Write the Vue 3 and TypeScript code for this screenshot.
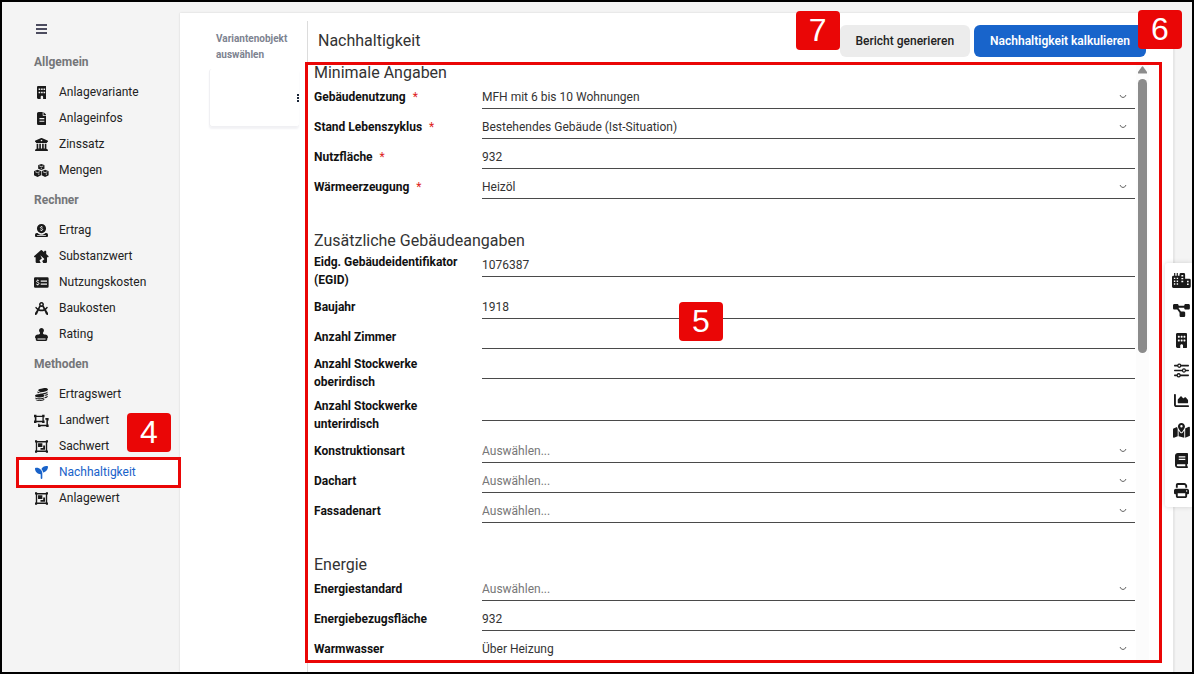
<script setup lang="ts">
import { reactive } from 'vue'

interface Icon {
  w: number
  d: string
  cut?: string
  cutWidth?: number
}

interface NavItem {
  label: string
  icon: string
  active?: boolean
}

interface Field {
  id: string
  label: string
  kind: 'select' | 'text'
  value: string
  required?: boolean
}

const icons: Record<string, Icon> = {
  building: {
    w: 384,
    d: 'M48 0C21.5 0 0 21.5 0 48V464c0 26.5 21.5 48 48 48h96V432c0-26.5 21.5-48 48-48s48 21.5 48 48v80h96c26.5 0 48-21.5 48-48V48c0-26.5-21.5-48-48-48H48zM64 240c0-8.8 7.2-16 16-16h32c8.8 0 16 7.2 16 16v32c0 8.8-7.2 16-16 16H80c-8.8 0-16-7.2-16-16V240zm112-16h32c8.8 0 16 7.2 16 16v32c0 8.8-7.2 16-16 16H176c-8.8 0-16-7.2-16-16V240c0-8.8 7.2-16 16-16zm80 16c0-8.8 7.2-16 16-16h32c8.8 0 16 7.2 16 16v32c0 8.8-7.2 16-16 16H272c-8.8 0-16-7.2-16-16V240zM80 96h32c8.8 0 16 7.2 16 16v32c0 8.8-7.2 16-16 16H80c-8.8 0-16-7.2-16-16V112c0-8.8 7.2-16 16-16zm80 16c0-8.8 7.2-16 16-16h32c8.8 0 16 7.2 16 16v32c0 8.8-7.2 16-16 16H176c-8.8 0-16-7.2-16-16V112zM272 96h32c8.8 0 16 7.2 16 16v32c0 8.8-7.2 16-16 16H272c-8.8 0-16-7.2-16-16V112c0-8.8 7.2-16 16-16z',
  },
  file: {
    w: 384,
    d: 'M64 0C28.7 0 0 28.7 0 64V448c0 35.3 28.7 64 64 64H320c35.3 0 64-28.7 64-64V160H256c-17.7 0-32-14.3-32-32V0H64zM256 0V128H384L256 0zM96 240H288V284H96zM96 344H288V388H96z',
  },
  bank: {
    w: 512,
    d: 'M243.4 2.6l-224 96c-14 6-21.8 21-18.7 35.8S16.8 160 32 160v8c0 13.3 10.7 24 24 24H456c13.3 0 24-10.7 24-24v-8c15.2 0 28.3-10.7 31.3-25.6s-4.8-29.9-18.7-35.8l-224-96c-8-3.4-17.2-3.4-25.2 0zM128 224H64V420.3c-.6 .3-1.2 .7-1.8 1.1l-48 32c-11.7 7.8-17 22.4-12.9 35.9S17.9 512 32 512H480c14.1 0 26.5-9.2 30.6-22.7s-1.1-28.1-12.9-35.9l-48-32c-.6-.4-1.2-.7-1.8-1.1V224H384V416H344V224H280V416H232V224H168V416H128V224zM256 64a32 32 0 1 1 0 64 32 32 0 1 1 0-64z',
  },
  cubes: {
    w: 576,
    d: 'M288 0L400 44Q412 50 412 64V186L288 240L164 186V64Q164 50 176 44ZM140 226L264 272Q276 278 276 292V440L140 508L12 452Q0 446 0 432V292Q0 278 12 272ZM436 226L564 272Q576 278 576 292V432Q576 446 564 452L436 508L300 440V292Q300 278 312 272Z',
    cut: 'M210 76L288 106L366 76M288 150V200M50 306L138 340L226 306M190 370V430M350 306L438 340L526 306M486 370V430',
    cutWidth: 30,
  },
  slot: {
    w: 512,
    d: 'M256 0A180 180 0 1 1 256 360A180 180 0 1 1 256 0zM64 352H100C140 398 198 424 256 424S372 398 412 352H448Q512 356 512 420V472Q512 512 470 512H42Q0 512 0 472V420Q0 356 64 352zM84 444V470H428V444z',
    cut: 'M300 126C270 102 214 106 214 142C214 182 302 170 302 216C302 256 240 258 208 232M256 84V112M256 246V278',
    cutWidth: 38,
  },
  house: {
    w: 576,
    d: 'M266 10Q288-10 310 10L400 88V54Q400 32 422 32H458Q480 32 480 54V158L566 232Q586 256 560 288H512V464Q512 512 464 512H366L322 436L404 366Q412 350 400 340L250 210L312 336L222 400Q214 410 220 420L264 512H112Q64 512 64 464V288H16Q-10 256 10 232z',
  },
  check: {
    w: 576,
    d: 'M48 48H528Q576 48 576 96V416Q576 464 528 464H48Q0 464 0 416V96Q0 48 48 48zM264 178V222H512V178zM264 300V344H512V300z',
    cut: 'M192 190C160 166 100 170 100 210C100 258 196 244 196 298C196 346 122 346 88 316M146 140V172M146 330V370',
    cutWidth: 38,
  },
  compass: {
    w: 512,
    d: 'M256 0A96 96 0 0 1 340 142L400 246Q430 226 452 196Q468 180 490 192Q512 206 500 230Q474 268 434 302L512 438V490Q506 516 480 508L432 484L372 340Q316 364 256 364T142 342L80 484L32 508Q6 516 0 490V438L84 304Q48 278 18 240Q4 216 24 196Q48 184 64 204Q84 232 116 250L172 142A96 96 0 0 1 256 0zM220 190L174 282Q256 314 338 282L292 190Q256 204 220 190zM256 60A36 36 0 1 0 256 132A36 36 0 1 0 256 60z',
  },
  stamp: {
    w: 512,
    d: 'M312 201.8c0-17.4 9.2-33.2 19.9-47C344.5 138.5 352 118.1 352 96c0-53-43-96-96-96s-96 43-96 96c0 22.1 7.5 42.5 20.1 58.8c10.7 13.8 19.9 29.6 19.9 47c0 29.9-24.3 54.2-54.2 54.2H112C50.1 256 0 306.1 0 368c0 20.9 13.4 38.7 32 45.3V464c0 26.5 21.5 48 48 48H432c26.5 0 48-21.5 48-48V413.3c18.6-6.6 32-24.4 32-45.3c0-61.9-50.1-112-112-112H366.2c-29.9 0-54.2-24.3-54.2-54.2zM416 416v32H96V416H416z',
  },
  coins: {
    w: 512,
    d: 'M320 10C430-14 512 14 512 62S436 148 320 158S128 130 128 86S210 32 320 10zM100 128C170 214 400 218 496 134V160Q496 230 370 244Q260 190 110 204Q92 180 100 128zM398 266Q470 250 512 212V250Q500 300 406 316zM398 350Q460 336 500 306V340Q480 380 392 400zM180 232C290 218 370 244 372 292S290 370 180 376S4 352 0 308S80 244 180 232zM8 370C100 422 290 424 376 352V384C360 464 30 470 8 404zM30 448C120 494 290 490 372 424V444C360 528 60 532 30 476z',
  },
  ungroup: {
    w: 576,
    d: 'M0 32H96V64H320V32H416V128H384V256H416V352H320V320H96V352H0V256H32V128H0zM96 116V268H332V116zM448 160H576V256H548V416H576V512H480V480H256V512H160V384H216V424H488V224H448z',
  },
  group: {
    w: 512,
    d: 'M480 128V96h20c6.6 0 12-5.4 12-12V24c0-6.600-5.400-12-12-12h-60c-6.600 0-12 5.400-12 12v20H84V24c0-6.600-5.400-12-12-12H12C5.400 12 0 17.400 0 24v60c0 6.600 5.400 12 12 12h20v320H12c-6.600 0-12 5.400-12 12v60c0 6.600 5.400 12 12 12h60c6.600 0 12-5.400 12-12v-20h344v20c0 6.600 5.400 12 12 12h60c6.600 0 12-5.400 12-12v-60c0-6.600-5.400-12-12-12h-20V128zM86 98V414H426V98zM120 132H290V280H120zM322 220H396V384H216V316H322z',
  },
  seedling: {
    w: 512,
    d: 'M512 32c0 113.6-84.6 207.5-194.2 222c-7.1-53.4-30.6-101.6-65.3-139.3C290.8 46.3 364 0 448 0h32c17.7 0 32 14.3 32 32zM0 96C0 78.3 14.3 64 32 64H64c123.7 0 224 100.3 224 224v32V480c0 17.7-14.3 32-32 32s-32-14.3-32-32V320C100.3 320 0 219.7 0 96z',
  },
  city: {
    w: 640,
    d: 'M72 0H112V96H160V0H200V96H256V48Q256 0 304 0H400Q448 0 448 48V192H592Q640 192 640 240V464Q640 512 592 512H48Q0 512 0 464V144Q0 96 48 96H72zM64 160V208H112V160zM160 160V208H208V160zM64 256V304H112V256zM160 256V304H208V256zM64 352V400H112V352zM160 352V400H208V352zM320 72V120H384V72zM320 168V216H384V168zM320 264V312H384V264zM512 264V312H568V264zM512 360V408H568V360z',
  },
  diagram: {
    w: 576,
    d: 'M0 80C0 53.5 21.5 32 48 32h96c26.5 0 48 21.5 48 48V96H384V80c0-26.5 21.5-48 48-48h96c26.5 0 48 21.5 48 48v96c0 26.5-21.5 48-48 48H432c-26.5 0-48-21.5-48-48V160H192v16c0 1.7-.1 3.4-.3 5L272 288h96c26.5 0 48 21.5 48 48v96c0 26.5-21.5 48-48 48H272c-26.5 0-48-21.5-48-48V336c0-1.7 .1-3.4 .3-5L144 224H48c-26.5 0-48-21.5-48-48V80z',
  },
  sliders: {
    w: 512,
    d: 'M20 62H112A72 72 0 0 1 248 62H492Q512 70 512 90T492 120H248A72 72 0 0 1 112 120H20Q0 112 0 90T20 62zM180 62A30 30 0 1 0 180 122A30 30 0 1 0 180 62zM20 227H272A72 72 0 0 1 408 227H492Q512 236 512 256T492 285H408A72 72 0 0 1 272 285H20Q0 276 0 256T20 227zM340 226A30 30 0 1 0 340 286A30 30 0 1 0 340 226zM20 392H92A72 72 0 0 1 228 392H492Q512 400 512 420T492 450H228A72 72 0 0 1 92 450H20Q0 442 0 420T20 392zM160 392A30 30 0 1 0 160 452A30 30 0 1 0 160 392z',
  },
  chart: {
    w: 512,
    d: 'M64 64c0-17.7-14.3-32-32-32S0 46.3 0 64V400c0 44.2 35.8 80 80 80H480c17.7 0 32-14.3 32-32s-14.3-32-32-32H80c-8.8 0-16-7.2-16-16V64zm96 288H448c17.7 0 32-14.3 32-32V251.8c0-7.6-2.7-15-7.7-20.8l-65.8-76.8c-12.1-14.2-33.7-15-46.9-1.8l-21 21c-10 10-26.4 9.2-35.4-1.6l-39.2-47c-12.6-15.1-35.7-15.4-48.7-.6L135.9 215c-5.1 5.8-7.9 13.3-7.9 21.1v84c0 17.7 14.3 32 32 32z',
  },
  map: {
    w: 576,
    d: 'M408 120c0 54.6-73.1 151.9-105.2 192c-7.7 9.6-22 9.6-29.6 0C241.1 271.9 168 174.6 168 120C168 53.7 221.7 0 288 0s120 53.7 120 120zm8 80.4c3.5-6.9 6.7-13.8 9.6-20.6c.5-1.2 1-2.5 1.5-3.7l116-46.4C558.9 123.4 576 135 576 152V422.8c0 9.8-6 18.6-15.1 22.3L416 503V200.4zM137.6 138.3c2.4 14.1 7.2 28.3 12.8 41.5c2.9 6.8 6.1 13.7 9.6 20.6V451.8L32.9 502.7C17.1 509 0 497.4 0 480.4V209.6c0-9.8 6-18.6 15.1-22.3l122.6-49zM327.8 332c13.9-17.4 35.7-45.7 56.2-77V504.3L192 449.4V255c20.5 31.3 42.3 59.6 56.2 77c20.5 25.6 59.1 25.6 79.6 0zM288 152a40 40 0 1 0 0-80 40 40 0 1 0 0 80z',
  },
  book: {
    w: 448,
    d: 'M96 0C43 0 0 43 0 96V416c0 53 43 96 96 96H416c17.7 0 32-14.3 32-32s-14.3-32-32-32V384c17.7 0 32-14.3 32-32V32c0-17.7-14.3-32-32-32H96zm0 384H352v64H96c-17.7 0-32-14.3-32-32s14.3-32 32-32zM128 112H352V156H128zM128 192H352V236H128z',
  },
  print: {
    w: 512,
    d: 'M128 0C92.7 0 64 28.7 64 64v96h64V64H354.7L384 93.3V160h64V93.3c0-17-6.7-33.3-18.7-45.3L400 18.7C388 6.7 371.7 0 354.7 0H128zM384 352v96H128V352H384zm64 32h32c17.7 0 32-14.3 32-32V256c0-35.3-28.7-64-64-64H64c-35.3 0-64 28.7-64 64v96c0 17.7 14.3 32 32 32H64v64c0 35.3 28.7 64 64 64H384c35.3 0 64-28.7 64-64V384zM432 248a24 24 0 1 1 0 48 24 24 0 1 1 0-48z',
  },
}

const groups: { title: string; items: NavItem[] }[] = [
  {
    title: 'Allgemein',
    items: [
      { label: 'Anlagevariante', icon: 'building' },
      { label: 'Anlageinfos', icon: 'file' },
      { label: 'Zinssatz', icon: 'bank' },
      { label: 'Mengen', icon: 'cubes' },
    ],
  },
  {
    title: 'Rechner',
    items: [
      { label: 'Ertrag', icon: 'slot' },
      { label: 'Substanzwert', icon: 'house' },
      { label: 'Nutzungskosten', icon: 'check' },
      { label: 'Baukosten', icon: 'compass' },
      { label: 'Rating', icon: 'stamp' },
    ],
  },
  {
    title: 'Methoden',
    items: [
      { label: 'Ertragswert', icon: 'coins' },
      { label: 'Landwert', icon: 'ungroup' },
      { label: 'Sachwert', icon: 'group' },
      { label: 'Nachhaltigkeit', icon: 'seedling', active: true },
      { label: 'Anlagewert', icon: 'group' },
    ],
  },
]

const sections = reactive<{ title: string; fields: Field[] }[]>([
  {
    title: 'Minimale Angaben',
    fields: [
      { id: 'nutzung', label: 'Gebäudenutzung', kind: 'select', value: 'MFH mit 6 bis 10 Wohnungen', required: true },
      { id: 'stand', label: 'Stand Lebenszyklus', kind: 'select', value: 'Bestehendes Gebäude (Ist-Situation)', required: true },
      { id: 'flaeche', label: 'Nutzfläche', kind: 'text', value: '932', required: true },
      { id: 'waerme', label: 'Wärmeerzeugung', kind: 'select', value: 'Heizöl', required: true },
    ],
  },
  {
    title: 'Zusätzliche Gebäudeangaben',
    fields: [
      { id: 'egid', label: 'Eidg. Gebäudeidentifikator (EGID)', kind: 'text', value: '1076387' },
      { id: 'baujahr', label: 'Baujahr', kind: 'text', value: '1918' },
      { id: 'zimmer', label: 'Anzahl Zimmer', kind: 'text', value: '' },
      { id: 'ober', label: 'Anzahl Stockwerke oberirdisch', kind: 'text', value: '' },
      { id: 'unter', label: 'Anzahl Stockwerke unterirdisch', kind: 'text', value: '' },
      { id: 'konstruktion', label: 'Konstruktionsart', kind: 'select', value: '' },
      { id: 'dach', label: 'Dachart', kind: 'select', value: '' },
      { id: 'fassade', label: 'Fassadenart', kind: 'select', value: '' },
    ],
  },
  {
    title: 'Energie',
    fields: [
      { id: 'standard', label: 'Energiestandard', kind: 'select', value: '' },
      { id: 'bezug', label: 'Energiebezugsfläche', kind: 'text', value: '932' },
      { id: 'warmwasser', label: 'Warmwasser', kind: 'select', value: 'Über Heizung' },
    ],
  },
])

const tools = [
  { icon: 'city', name: 'Objekte' },
  { icon: 'diagram', name: 'Struktur' },
  { icon: 'building', name: 'Gebäude' },
  { icon: 'sliders', name: 'Parameter' },
  { icon: 'chart', name: 'Auswertung' },
  { icon: 'map', name: 'Karte' },
  { icon: 'book', name: 'Handbuch' },
  { icon: 'print', name: 'Drucken' },
]
</script>

<template>
  <div class="app">
    <aside class="sidebar">
      <button class="menu" type="button" aria-label="Menü">
        <svg width="14" height="10" viewBox="0 0 14 10"><path d="M2 1H13M2 5H13M2 9H13" stroke="currentColor" stroke-width="1.4" /></svg>
      </button>
      <nav>
        <section v-for="g in groups" :key="g.title">
          <h2>{{ g.title }}</h2>
          <ul>
            <li v-for="it in g.items" :key="it.label" :class="{ active: it.active }">
              <a href="#">
                <span class="glyph">
                  <svg :viewBox="`0 0 ${icons[it.icon].w} 512`">
                    <path :d="icons[it.icon].d" fill="currentColor" fill-rule="evenodd" />
                    <path v-if="icons[it.icon].cut" :d="icons[it.icon].cut" fill="none" stroke="#f4f4f4" :stroke-width="icons[it.icon].cutWidth" />
                  </svg>
                </span>
                {{ it.label }}
              </a>
              <span v-if="it.active" class="badge step4">4</span>
            </li>
          </ul>
        </section>
      </nav>
    </aside>

    <div class="card">
      <div class="variants">
        <p>Variantenobjekt auswählen</p>
        <div class="tile">
          <button type="button" class="dots" aria-label="Optionen">
            <svg width="2" height="8" viewBox="0 0 2 8"><path d="M0 0H2V2H0zM0 3H2V5H0zM0 6H2V8H0z" fill="currentColor" /></svg>
          </button>
        </div>
      </div>

      <main>
        <header>
          <h1>Nachhaltigkeit</h1>
          <div class="action">
            <button type="button" class="btn">Bericht generieren</button>
            <span class="badge step7">7</span>
          </div>
          <div class="action">
            <button type="button" class="btn primary">Nachhaltigkeit kalkulieren</button>
            <span class="badge step6">6</span>
          </div>
        </header>

        <div class="scroll">
          <form @submit.prevent>
            <section v-for="s in sections" :key="s.title">
              <h2>{{ s.title }}</h2>
              <div v-for="f in s.fields" :key="f.id" class="row">
                <label :for="f.id">
                  <span>{{ f.label }}<i v-if="f.required">*</i></span>
                </label>
                <div v-if="f.kind === 'select'" class="select">
                  <select :id="f.id" :class="{ empty: !f.value }">
                    <option>{{ f.value || 'Auswählen...' }}</option>
                  </select>
                  <svg width="8" height="5" viewBox="0 0 8 5"><path d="M1 1Q2 3.500 4 3.500T7 1" fill="none" stroke="#666" /></svg>
                </div>
                <input v-else :id="f.id" v-model="f.value" type="text" />
              </div>
            </section>
          </form>
          <div class="bar" aria-hidden="true">
            <svg width="9" height="8" viewBox="0 0 9 8"><path d="M4 .5Q4.500 0 5 .5L9 6V7.500H0V6z" fill="#8b8b8b" /></svg>
            <div class="thumb"></div>
          </div>
        </div>
        <div class="outline"></div>
        <span class="badge step5">5</span>
      </main>
    </div>

    <nav class="tools" aria-label="Werkzeuge">
      <button v-for="t in tools" :key="t.name" type="button" :aria-label="t.name">
        <svg :viewBox="`0 0 ${icons[t.icon].w} 512`">
          <path :d="icons[t.icon].d" fill="currentColor" fill-rule="evenodd" />
        </svg>
      </button>
    </nav>
  </div>
</template>

<style>
html,
body {
  margin: 0;
  overflow: hidden;
}
</style>

<style scoped>
* {
  box-sizing: border-box;
  margin: 0;
  padding: 0;
}
.app {
  position: relative;
  display: flex;
  height: 100vh;
  padding-right: 18px;
  border: 2px solid #000;
  background: #f4f4f4;
  font: 12px/18px Roboto, sans-serif;
  color: #222;
  overflow: hidden;
}
button,
input,
select {
  border: 0;
  background: none;
  font: inherit;
  color: inherit;
}
.sidebar {
  flex: 0 0 178px;
}
.menu {
  display: flex;
  align-items: center;
  height: 43px;
  padding: 10px 32px 0;
  color: #15152e;
}
.sidebar h2 {
  padding-left: 32px;
  font-size: 12px;
  line-height: 34px;
  font-weight: 700;
  color: #747679;
}
ul {
  list-style: none;
}
li {
  position: relative;
}
li a {
  position: relative;
  display: flex;
  align-items: center;
  height: 26px;
  padding-left: 32px;
  gap: 10px;
  color: #222;
  text-decoration: none;
}
.glyph {
  display: flex;
  justify-content: center;
  width: 15px;
  color: #1a1a1a;
}
.glyph svg {
  flex: none;
  height: 13px;
}
li.active a,
li.active .glyph {
  color: #1862c9;
}
li.active::before {
  content: '';
  position: absolute;
  inset: -2px -1px -3px 14px;
  border: 3px solid #ea0606;
  background: #fff;
}
.card {
  flex: 1;
  min-width: 0;
  display: flex;
  margin-top: 11px;
  border-right: 1px solid #e6e6e6;
  background: #fff;
  box-shadow: 0 0 2px rgba(0, 0, 0, 0.14);
}
.variants {
  flex: 0 0 127px;
  padding: 18px 8px 0 29px;
}
.variants p {
  padding-left: 7px;
  font-size: 10px;
  line-height: 16px;
  font-weight: 700;
  color: #7d8390;
}
.tile {
  display: flex;
  align-items: center;
  justify-content: flex-end;
  height: 58px;
  margin-top: 6px;
  border-left: 1px solid #f0f0f3;
  border-bottom: 1px solid #f0f0f3;
  border-radius: 3px;
  box-shadow: 0 2px 2px #f2f2f5;
}
.dots {
  display: flex;
  color: #1b2638;
}
main {
  position: relative;
  flex: 1;
  min-width: 0;
  display: flex;
  flex-direction: column;
  margin-top: 8px;
  border-left: 1px solid #dcdcdc;
}
header {
  flex: none;
  display: flex;
  align-items: center;
  gap: 4px;
  height: 40px;
  padding: 0 27px 0 10px;
}
h1 {
  flex: 1;
  font-size: 16px;
  font-weight: 400;
  color: #333;
}
.action {
  position: relative;
}
.btn {
  height: 32px;
  padding: 0 16px;
  border-radius: 6px;
  background: #ececec;
  font-weight: 500;
  white-space: nowrap;
}
.btn.primary {
  background: #1864cb;
  color: #fff;
  font-weight: 600;
}
.scroll {
  flex: 1;
  min-height: 0;
  display: flex;
  margin-bottom: 10px;
  padding: 0 24px 0 6px;
  overflow: hidden;
}
form {
  flex: 1;
  min-width: 0;
}
form section {
  margin-bottom: 30px;
}
form h2 {
  font-size: 16px;
  line-height: 24px;
  font-weight: 400;
  color: #333;
}
.row {
  display: grid;
  grid-template-columns: 150px 1fr;
  column-gap: 18px;
  align-items: start;
}
.row + .row {
  margin-top: 6px;
}
label {
  display: flex;
  align-items: center;
  min-height: 24px;
  font-weight: 700;
  color: #111;
}
label i {
  margin-left: 7px;
  font-style: normal;
  font-weight: 400;
  color: #d22;
}
input,
.select {
  width: 100%;
  height: 24px;
  border-bottom: 1px solid #4a4a4a;
  color: #333;
}
.select {
  display: flex;
  align-items: center;
}
.select select {
  flex: 1;
  height: 23px;
  margin-right: -16px;
  padding-right: 16px;
  appearance: none;
}
.select svg {
  margin-right: 8px;
  pointer-events: none;
}
select.empty {
  color: #777;
}
.bar {
  display: flex;
  flex-direction: column;
  align-items: center;
  gap: 5px;
  width: 13px;
  margin-left: 1px;
  padding-top: 5px;
  background: #fcfcfc;
}
.thumb {
  width: 9px;
  height: 46%;
  border-radius: 5px;
  background: #8b8b8b;
}
.outline {
  position: absolute;
  inset: 41px 11px 9px -3px;
  border: 3px solid #ea0606;
  pointer-events: none;
}
.badge {
  position: absolute;
  width: 44px;
  height: 39px;
  border-radius: 4px;
  background: #ea0606;
  font: 32px/38px 'Liberation Sans', Arial, sans-serif;
  text-align: center;
  color: #fff;
}
.step4 {
  left: 125px;
  top: -46px;
}
.step5 {
  left: 371px;
  top: 281px;
}
.step6 {
  right: -36px;
  top: -15px;
  z-index: 1;
}
.step7 {
  left: -44px;
  top: -14px;
}
.tools {
  position: absolute;
  right: 0;
  top: 261px;
  display: flex;
  flex-direction: column;
  width: 27px;
  padding: 2px 0 2px 6px;
  border-radius: 3px 0 0 3px;
  background: #fff;
  box-shadow: 0 0 5px rgba(0, 0, 0, 0.15);
}
.tools button {
  display: flex;
  align-items: center;
  justify-content: center;
  height: 30px;
  color: #1a1a1a;
}
.tools svg {
  flex: none;
  height: 15px;
}
</style>
